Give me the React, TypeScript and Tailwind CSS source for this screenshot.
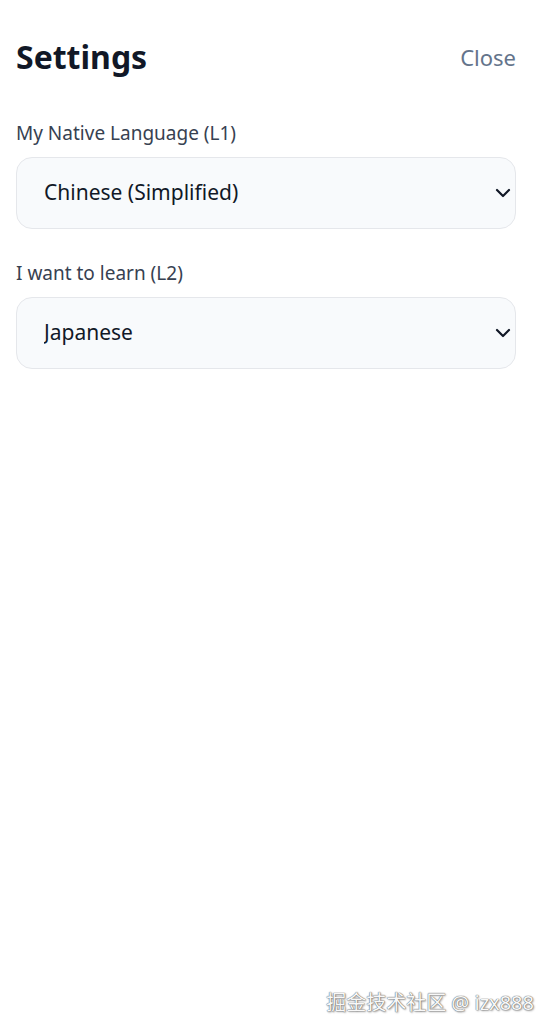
import { ChevronDown } from 'lucide-react'

const LANGS = ['Chinese (Simplified)', 'English', 'Japanese', 'Korean', 'Spanish', 'French']

function LangSelect({ label, value }: { label: string; value: string }) {
  return (
    <div className="flex flex-col">
      <label className="text-[19px] leading-[28px] text-[#374151] mb-[10px]">{label}</label>
      <div className="relative">
        <select
          defaultValue={value}
          className="w-full h-[72px] appearance-none rounded-2xl border border-[#e5e7eb] bg-[#f8fafc] pl-[27px] pr-10 text-[21px] text-[#111827] outline-none"
        >
          {LANGS.map((l) => (
            <option key={l} value={l}>
              {l}
            </option>
          ))}
        </select>
        <ChevronDown
          className="pointer-events-none absolute right-[1px] top-1/2 -translate-y-1/2 text-[#111827]"
          size={24}
          strokeWidth={2.2}
        />
      </div>
    </div>
  )
}

export default function App() {
  return (
    <div className="relative min-h-[1036px] bg-white" style={{ fontFamily: '"Noto Sans", "Noto Sans CJK SC", sans-serif' }}>
      <div className="pl-4 pr-[36px] pt-[35px] flex flex-col">
        <header className="flex items-center justify-between mb-[40px]">
          <h1 className="text-[32px] leading-[44px] font-bold text-[#111827]">Settings</h1>
          <button className="text-[22px] text-[#64748b]">Close</button>
        </header>
        <div className="flex flex-col gap-[30px]">
          <LangSelect label="My Native Language (L1)" value="Chinese (Simplified)" />
          <LangSelect label="I want to learn (L2)" value="Japanese" />
        </div>
      </div>
      <div
        className="absolute right-[18px] bottom-[18px] text-[20px] text-[#f8f8f8]"
        style={{ textShadow: '0 0 1px #666, 0 0 1px #666, 1px 1px 2px #999' }}
      >
        掘金技术社区 @ izx888
      </div>
    </div>
  )
}
